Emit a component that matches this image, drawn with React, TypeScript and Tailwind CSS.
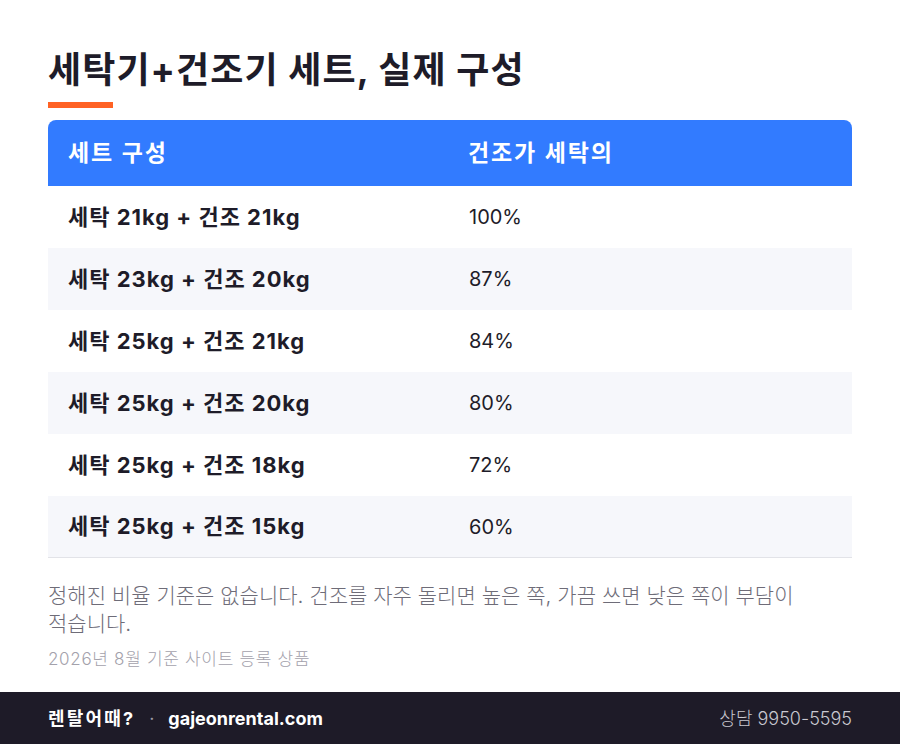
const rows = [
  { set: "세탁 21kg + 건조 21kg", ratio: "100%" },
  { set: "세탁 23kg + 건조 20kg", ratio: "87%" },
  { set: "세탁 25kg + 건조 21kg", ratio: "84%" },
  { set: "세탁 25kg + 건조 20kg", ratio: "80%" },
  { set: "세탁 25kg + 건조 18kg", ratio: "72%" },
  { set: "세탁 25kg + 건조 15kg", ratio: "60%" },
];

export default function App() {
  return (
    <div
      className="w-[900px] h-[744px] bg-white flex flex-col text-[#1e1c29]"
      style={{ fontFamily: 'Inter, "Noto Sans CJK KR", sans-serif' }}
    >
      <div className="flex-1 px-12 pt-[45px]">
        <h1 className="text-[36px] leading-[50px] font-bold tracking-[0.03em]">
          세탁기+건조기 세트, 실제 구성
        </h1>
        <div className="mt-[7px] w-[65px] h-[6px] bg-[#ff6224]" />

        <div className="mt-3">
          <div className="flex h-[66px] items-center bg-[#327bff] rounded-t-lg text-white text-[23px] font-semibold tracking-[0.08em]">
            <div className="w-1/2 pl-5">세트 구성</div>
            <div className="w-1/2 pl-[18px]">건조가 세탁의</div>
          </div>
          {rows.map((r, i) => (
            <div
              key={r.set}
              className={`flex h-[62px] items-center ${
                i % 2 === 1 ? "bg-[#f6f7fb]" : "bg-white"
              } ${i === rows.length - 1 ? "border-b border-[#e2e3e8]" : ""}`}
            >
              <div className="w-1/2 pl-5 font-bold text-[22px] tracking-[0.045em]">
                {r.set}
              </div>
              <div className="w-1/2 pl-[19px] text-[20px]">{r.ratio}</div>
            </div>
          ))}
        </div>

        <p className="mt-[24px] text-[21px] leading-[28px] text-[#6e6c78] font-light break-keep">
          정해진 비율 기준은 없습니다. 건조를 자주 돌리면 높은 쪽, 가끔 쓰면 낮은 쪽이 부담이 적습니다.
        </p>
        <p className="mt-[9px] text-[17px] leading-6 text-[#a3a1ab] font-light tracking-[0.04em]">
          2026년 8월 기준 사이트 등록 상품
        </p>
      </div>

      <div className="h-[52px] bg-[#1e1b28] px-12 flex items-center justify-between text-[18px]">
        <div className="text-white font-bold flex items-center gap-[14px]">
          <span className="tracking-[0.12em]">렌탈어때?</span>
          <span className="text-[#9d9ba6] font-normal">·</span>
          <span>gajeonrental.com</span>
        </div>
        <div className="text-[#c9c8d0] font-light">상담 9950-5595</div>
      </div>
    </div>
  );
}
